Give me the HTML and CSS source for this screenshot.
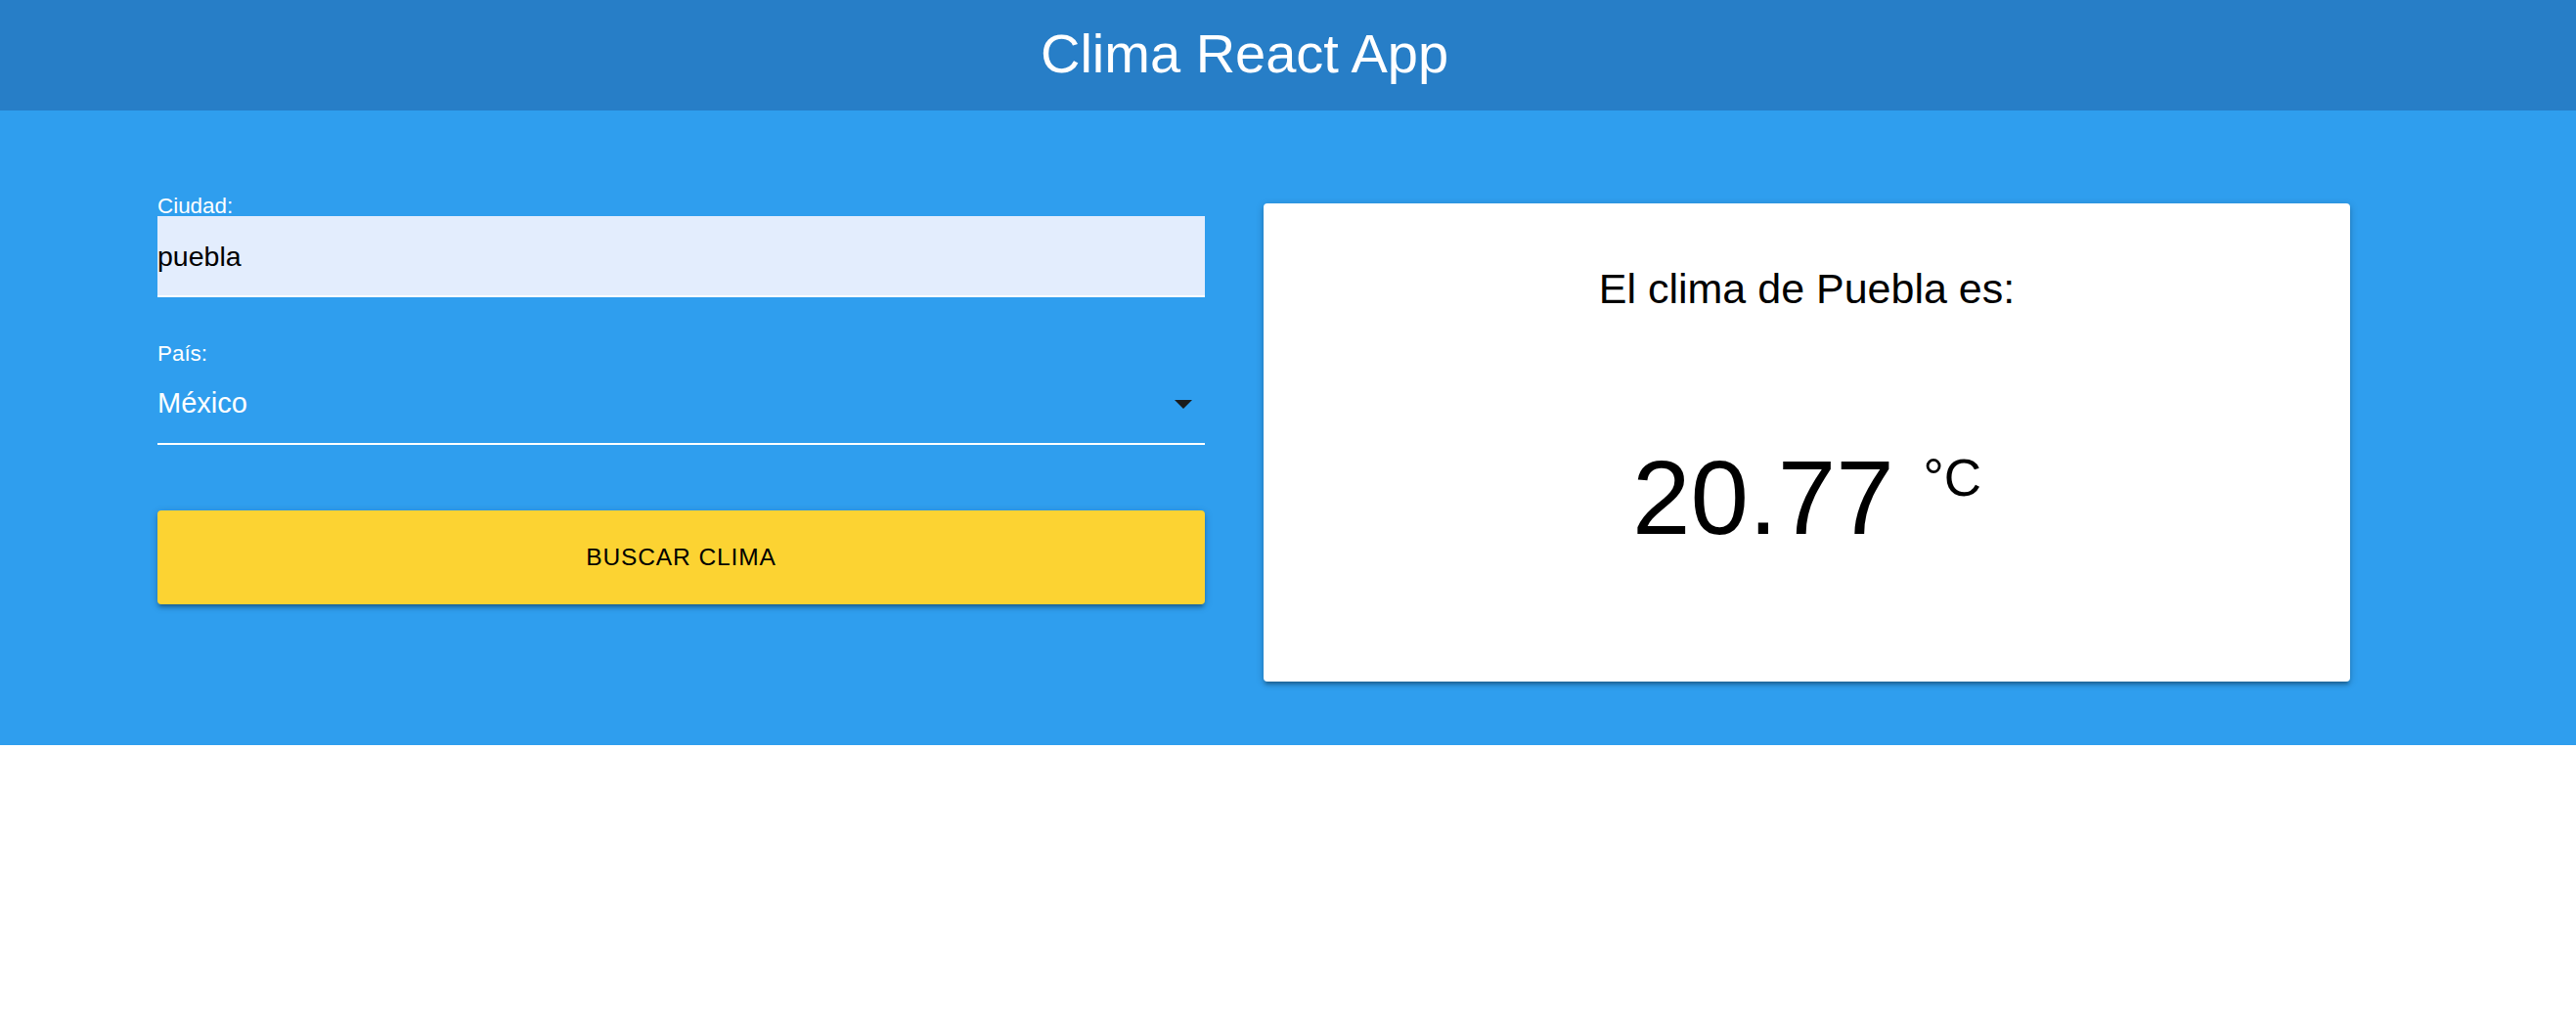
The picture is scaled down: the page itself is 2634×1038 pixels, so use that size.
FILE: index.html
```html
<!DOCTYPE html>
<html lang="es">
<head>
<meta charset="utf-8">
<title>Clima React App</title>
<link rel="stylesheet" href="styles.css">
</head>
<body>
<header class="nav">
  <span class="brand">Clima React App</span>
</header>
<main class="main">
  <div class="row">
    <form class="form-col">
      <label class="field-label" for="ciudad">Ciudad:</label>
      <input class="text-input" id="ciudad" type="text" value="puebla">
      <label class="field-label pais-label">País:</label>
      <div class="select">
        <span class="select-value">México</span>
        <svg class="caret" width="18" height="9" viewBox="0 0 18 9"><path d="M0 0H18L9 9Z" fill="#1b1b1b"/></svg>
      </div>
      <button class="btn" type="button">Buscar clima</button>
    </form>
    <section class="card">
      <h2 class="card-title">El clima de Puebla es:</h2>
      <p class="temp">20.77 <span class="unit">°C</span></p>
    </section>
  </div>
</main>
</body>
</html>
```

FILE: styles.css
```css
html, body {
  margin: 0;
  padding: 0;
  background: #ffffff;
  font-family: "Liberation Sans", Arial, Helvetica, sans-serif;
}

.nav {
  height: 113px;
  background: #277ec7;
  display: flex;
  justify-content: center;
  padding-right: 89px;
  box-sizing: border-box;
}

.brand {
  color: #ffffff;
  font-size: 56px;
  line-height: 109px;
}

.main {
  background: #2f9eee;
  height: 649px;
  box-sizing: border-box;
  padding: 88px 0 0 161px;
}

.row {
  display: flex;
  align-items: flex-start;
  gap: 60px;
}

.form-col {
  width: 1071px;
  display: flex;
  flex-direction: column;
  margin: 0;
}

.field-label {
  color: #ffffff;
  font-size: 22.4px;
  line-height: 20px;
  height: 20px;
  display: block;
}

.text-input {
  display: block;
  width: 100%;
  height: 83px;
  box-sizing: border-box;
  margin: 0;
  padding: 2px 0 0 0;
  border: none;
  border-bottom: 2px solid #ffffff;
  background: #e3edfd;
  color: #000000;
  font-family: "Liberation Sans", Arial, Helvetica, sans-serif;
  font-size: 28.5px;
  outline: none;
}

.pais-label {
  margin-top: 48px;
}

.select {
  height: 83px;
  box-sizing: border-box;
  border-bottom: 2px solid #ffffff;
  display: flex;
  align-items: center;
  justify-content: space-between;
}

.select-value {
  color: #ffffff;
  font-size: 29px;
  line-height: 81px;
}

.caret {
  margin-right: 13px;
  margin-top: 2px;
}

.btn {
  margin-top: 67px;
  height: 96px;
  width: 100%;
  border: none;
  border-radius: 4px;
  background: #fcd332;
  color: #000000;
  font-family: "Liberation Sans", Arial, Helvetica, sans-serif;
  font-size: 24.5px;
  letter-spacing: 0.9px;
  text-transform: uppercase;
  padding: 0;
  box-shadow: 0 3.5px 3.5px 0 rgba(0,0,0,0.14), 0 5px 2px -3.5px rgba(0,0,0,0.12), 0 2px 9px 0 rgba(0,0,0,0.2);
}

.card {
  margin-top: 7px;
  width: 1111px;
  height: 489px;
  box-sizing: border-box;
  background: #ffffff;
  border-radius: 4px;
  padding-top: 62px;
  text-align: center;
  box-shadow: 0 3.5px 3.5px 0 rgba(0,0,0,0.14), 0 5px 2px -3.5px rgba(0,0,0,0.12), 0 2px 9px 0 rgba(0,0,0,0.2);
}

.card-title {
  margin: 0;
  font-weight: normal;
  font-size: 43px;
  line-height: 50px;
  color: #000000;
}

.temp {
  margin: 128.6px 0 0 0;
  font-size: 107px;
  line-height: 120px;
  color: #000000;
}

.unit {
  font-size: 53px;
  line-height: 53px;
  vertical-align: 39px;
}
```
